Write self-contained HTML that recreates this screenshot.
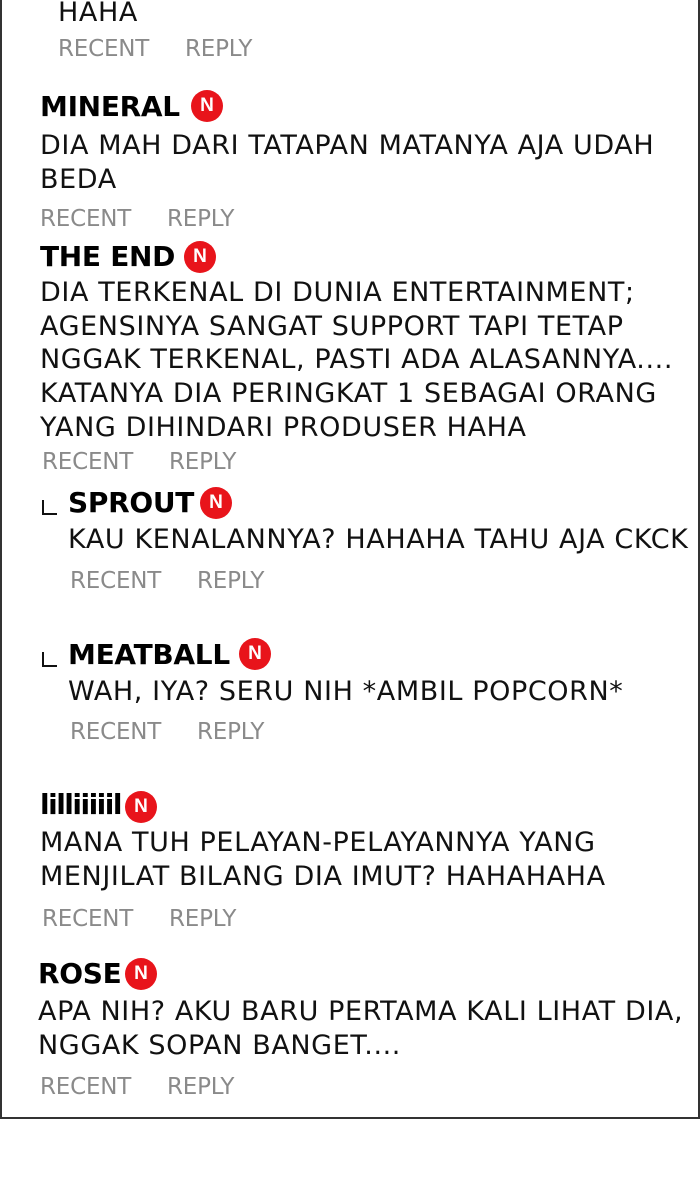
<!DOCTYPE html>
<html><head><meta charset="utf-8"><style>
body{margin:0;width:700px;height:1200px;background:#fff;position:relative;overflow:hidden;font-family:"DejaVu Sans","Liberation Sans",sans-serif;}
.box{position:absolute;left:0;top:-5px;width:696px;height:1122px;border:2px solid #333;border-top:none;}
.t{position:absolute;white-space:nowrap;color:#111;font-size:27px;line-height:30px;letter-spacing:0.6px;}
.n{font-weight:bold;font-size:28px;color:#000;letter-spacing:-0.3px}
.g{color:#8a8a8a;font-size:23px;letter-spacing:-0.2px}
.b{position:absolute;width:32px;height:32px;border-radius:50%;background:#e8141b;color:#fff;font:bold 19px/32px "Liberation Sans",sans-serif;text-align:center}
.l{position:absolute;width:13px;height:13px;border-left:2px solid #111;border-bottom:2px solid #111}
</style></head><body>
<div class="box"></div>
<div class="t" style="left:58px;top:-2px">HAHA</div>
<div class="t g" style="left:58px;top:34px">RECENT</div><div class="t g" style="left:185px;top:34px">REPLY</div>

<div class="t n" style="left:40px;top:92px">MINERAL</div><div class="b" style="left:191px;top:90px">N</div>
<div class="t" style="left:40px;top:131px">DIA MAH DARI TATAPAN MATANYA AJA UDAH</div>
<div class="t" style="left:40px;top:165px">BEDA</div>
<div class="t g" style="left:40px;top:204px">RECENT</div><div class="t g" style="left:167px;top:204px">REPLY</div>

<div class="t n" style="left:40px;top:242px">THE END</div><div class="b" style="left:184px;top:241px">N</div>
<div class="t" style="left:40px;top:278px">DIA TERKENAL DI DUNIA ENTERTAINMENT;</div>
<div class="t" style="left:40px;top:312px">AGENSINYA SANGAT SUPPORT TAPI TETAP</div>
<div class="t" style="left:40px;top:345px">NGGAK TERKENAL, PASTI ADA ALASANNYA....</div>
<div class="t" style="left:40px;top:379px">KATANYA DIA PERINGKAT 1 SEBAGAI ORANG</div>
<div class="t" style="left:40px;top:413px">YANG DIHINDARI PRODUSER HAHA</div>
<div class="t g" style="left:42px;top:447px">RECENT</div><div class="t g" style="left:169px;top:447px">REPLY</div>

<div class="l" style="left:42px;top:500px"></div>
<div class="t n" style="left:68px;top:488px">SPROUT</div><div class="b" style="left:200px;top:487px">N</div>
<div class="t" style="left:68px;top:525px">KAU KENALANNYA? HAHAHA TAHU AJA CKCK</div>
<div class="t g" style="left:70px;top:566px">RECENT</div><div class="t g" style="left:197px;top:566px">REPLY</div>

<div class="l" style="left:42px;top:652px"></div>
<div class="t n" style="left:68px;top:640px">MEATBALL</div><div class="b" style="left:239px;top:638px">N</div>
<div class="t" style="left:68px;top:677px">WAH, IYA? SERU NIH *AMBIL POPCORN*</div>
<div class="t g" style="left:70px;top:717px">RECENT</div><div class="t g" style="left:197px;top:717px">REPLY</div>

<div class="t n" style="left:40px;top:790px;letter-spacing:-1.5px">lilliiiiil</div><div class="b" style="left:125px;top:791px">N</div>
<div class="t" style="left:40px;top:828px">MANA TUH PELAYAN-PELAYANNYA YANG</div>
<div class="t" style="left:40px;top:862px">MENJILAT BILANG DIA IMUT? HAHAHAHA</div>
<div class="t g" style="left:42px;top:904px">RECENT</div><div class="t g" style="left:169px;top:904px">REPLY</div>

<div class="t n" style="left:38px;top:959px">ROSE</div><div class="b" style="left:125px;top:958px">N</div>
<div class="t" style="left:38px;top:997px">APA NIH? AKU BARU PERTAMA KALI LIHAT DIA,</div>
<div class="t" style="left:38px;top:1031px">NGGAK SOPAN BANGET....</div>
<div class="t g" style="left:40px;top:1072px">RECENT</div><div class="t g" style="left:167px;top:1072px">REPLY</div>
</body></html>
